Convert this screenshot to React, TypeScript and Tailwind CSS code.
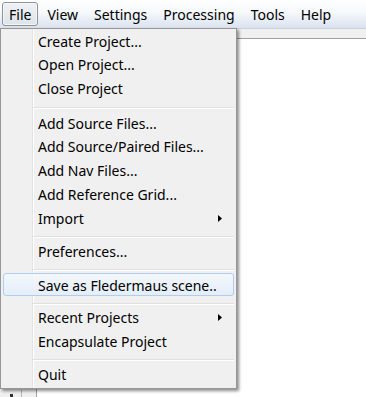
import React from "react";

type Row =
  | { kind: "item"; t: string; h: number; sub?: boolean; hl?: boolean }
  | { kind: "sep"; h: number };

const rows: Row[] = [
  { kind: "item", t: "Create Project...", h: 23 },
  { kind: "item", t: "Open Project...", h: 24 },
  { kind: "item", t: "Close Project", h: 24 },
  { kind: "sep", h: 11 },
  { kind: "item", t: "Add Source Files...", h: 23 },
  { kind: "item", t: "Add Source/Paired Files...", h: 24 },
  { kind: "item", t: "Add Nav Files...", h: 24 },
  { kind: "item", t: "Add Reference Grid...", h: 24 },
  { kind: "item", t: "Import", h: 23, sub: true },
  { kind: "sep", h: 10 },
  { kind: "item", t: "Preferences...", h: 23 },
  { kind: "sep", h: 11 },
  { kind: "item", t: "Save as Fledermaus scene..", h: 23, hl: true },
  { kind: "sep", h: 9 },
  { kind: "item", t: "Recent Projects", h: 24, sub: true },
  { kind: "item", t: "Encapsulate Project", h: 23 },
  { kind: "sep", h: 10 },
  { kind: "item", t: "Quit", h: 23 },
];

const menubar = ["File", "View", "Settings", "Processing", "Tools", "Help"];

function Arrow() {
  return (
    <svg width="4" height="7" viewBox="0 0 4 7" className="block">
      <path d="M0 0 L4 3.5 L0 7 Z" fill="#000" />
    </svg>
  );
}

export default function App() {
  return (
    <div
      className="relative w-[366px] h-[397px] overflow-hidden bg-white text-black"
      style={{ fontFamily: '"Noto Sans", "Open Sans", sans-serif' }}
    >
      {/* Menu bar */}
      <div className="h-[28px] flex items-center pl-[2px] gap-[2px] bg-[linear-gradient(to_bottom,#ffffff_0%,#f6f8fb_45%,#e6ecf5_75%,#dbe3ef_100%)] text-[14px]">
        {menubar.map((m, i) => (
          <div
            key={m}
            className={
              "h-[24px] px-[6px] flex items-center rounded-[3px] border " +
              (i === 0
                ? "border-[#8d9299] bg-[linear-gradient(to_bottom,#eef1f5,#dfe4ea)] shadow-[inset_0_0_0_1px_rgba(255,255,255,0.6)]"
                : "border-transparent")
            }
          >
            {m}
          </div>
        ))}
      </div>
      <div className="h-px bg-[#c9d0da]" />
      {/* Toolbar strip */}
      <div className="h-[9px] bg-[#f0f0f0]" />
      <div className="h-px bg-[#a0a0a0]" />
      {/* Body */}
      <div className="flex h-[358px]">
        <div className="w-[37px] bg-[#f0f0f0] border-r border-[#a0a0a0] flex flex-col justify-end">
          <div className="h-[7px] flex">
            <div className="w-[22px] border-r border-[#b5b5b5] flex justify-start pl-[10px] pt-[4px]">
              <div className="w-[3px] h-[3px] bg-[#303030]" />
            </div>
          </div>
        </div>
        <div className="flex-1 bg-white" />
      </div>

      {/* File menu dropdown */}
      <div
        className="absolute left-0 top-[28px] w-[237px] border border-[#979797] pl-[2px] pr-[2px] pb-[3px] shadow-[2px_2px_3px_rgba(0,0,0,0.45)] bg-[linear-gradient(to_right,#f0f0f0_31px,#e2e3e3_31px,#e2e3e3_32px,#ffffff_32px,#ffffff_33px,#f0f0f0_33px)] text-[14px]"
      >
        {rows.map((r, i) =>
          r.kind === "sep" ? (
            <div key={i} style={{ height: r.h }} className="pt-[7px] pl-[30px]">
              <div className="h-px bg-[#e0e0e0]" />
              <div className="h-px bg-white" />
            </div>
          ) : (
            <div
              key={i}
              style={{ height: r.h }}
              className={
                "flex items-center justify-between pl-[35px] pr-[11px] pt-[1px] rounded-[3px] border " +
                (r.hl
                  ? "border-[#aecdf0] bg-[linear-gradient(to_bottom,rgba(244,248,253,0.9),rgba(227,237,250,0.9))]"
                  : "border-transparent")
              }
            >
              <span className="whitespace-nowrap leading-[19px]" style={{ marginLeft: -1 }}>
                {r.t}
              </span>
              {r.sub ? <Arrow /> : null}
            </div>
          )
        )}
      </div>
    </div>
  );
}
